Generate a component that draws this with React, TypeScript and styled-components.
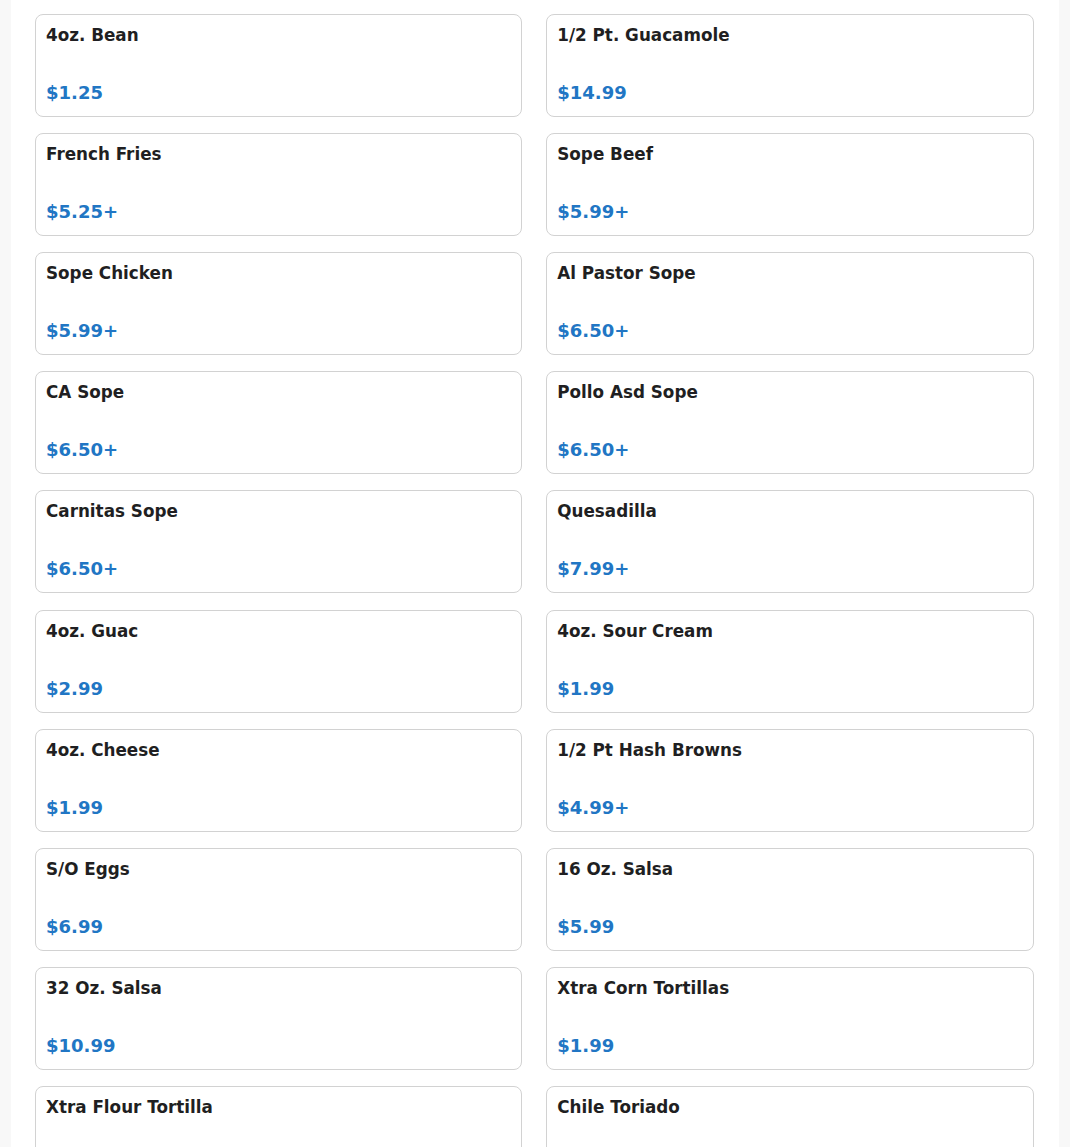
import React from "react";
import styled, {createGlobalStyle} from "styled-components";

type Item = {name: string; price: string};

const items: Item[] = [
    {name: "4oz. Bean", price: "$1.25"},
    {name: "1/2 Pt. Guacamole", price: "$14.99"},
    {name: "French Fries", price: "$5.25+"},
    {name: "Sope Beef", price: "$5.99+"},
    {name: "Sope Chicken", price: "$5.99+"},
    {name: "Al Pastor Sope", price: "$6.50+"},
    {name: "CA Sope", price: "$6.50+"},
    {name: "Pollo Asd Sope", price: "$6.50+"},
    {name: "Carnitas Sope", price: "$6.50+"},
    {name: "Quesadilla", price: "$7.99+"},
    {name: "4oz. Guac", price: "$2.99"},
    {name: "4oz. Sour Cream", price: "$1.99"},
    {name: "4oz. Cheese", price: "$1.99"},
    {name: "1/2 Pt Hash Browns", price: "$4.99+"},
    {name: "S/O Eggs", price: "$6.99"},
    {name: "16 Oz. Salsa", price: "$5.99"},
    {name: "32 Oz. Salsa", price: "$10.99"},
    {name: "Xtra Corn Tortillas", price: "$1.99"},
    {name: "Xtra Flour Tortilla", price: "$1.99"},
    {name: "Chile Toriado", price: "$1.99"},
];

export default function App(): JSX.Element {
    return (
        <>
            <GlobalStyle />
            <Page>
                <Panel>
                    <MenuGrid>
                        {items.map((item) => (
                            <ItemCard key={item.name}>
                                <ItemName>{item.name}</ItemName>
                                <ItemPrice>{item.price}</ItemPrice>
                            </ItemCard>
                        ))}
                    </MenuGrid>
                </Panel>
            </Page>
        </>
    )
}

const GlobalStyle = createGlobalStyle`
  html, body {
    margin: 0;
    padding: 0;
    background: #f8f8f8;
  }
  body {
    font-family: "DejaVu Sans", sans-serif;
  }
`

const Page = styled.div`
  padding: 0 11px;
  height: 1147px;
  overflow: hidden;
`

const Panel = styled.main`
  background: #ffffff;
  padding: 14px 25.5px 0 24px;
  min-height: 100%;
`

const MenuGrid = styled.div`
  display: grid;
  grid-template-columns: 1fr 1fr;
  column-gap: 24px;
  row-gap: 16.11px;
`

const ItemCard = styled.div`
  display: flex;
  flex-direction: column;
  justify-content: space-between;
  height: 103px;
  box-sizing: border-box;
  padding: 10px 10px 13px 10px;
  border: 1px solid #d2d2d2;
  border-radius: 8px;
  background: #fff;
`

const ItemName = styled.div`
  font-size: 16.8px;
  font-weight: bold;
  line-height: 20px;
  color: #1f1f22;
`

const ItemPrice = styled.div`
  font-size: 18px;
  font-weight: bold;
  line-height: 20px;
  color: #2176c4;
`
